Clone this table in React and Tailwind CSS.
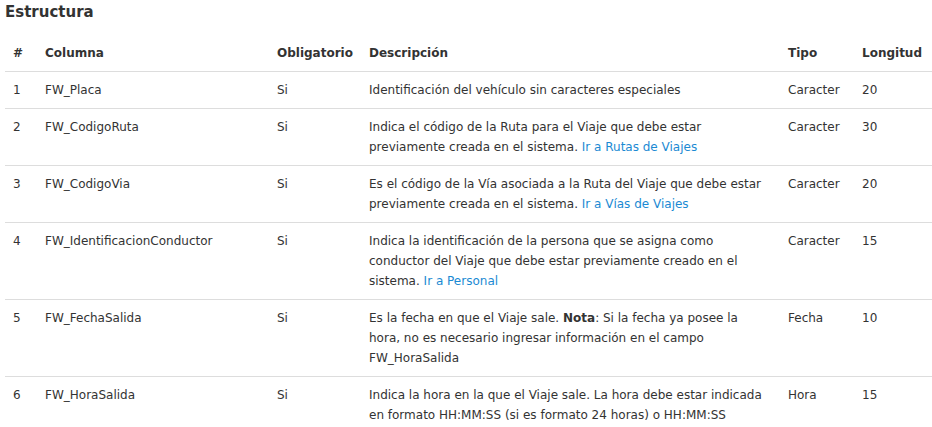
import React from "react";

const L = ({ children }) => <span className="text-[#1b8ad3]">{children}</span>;

const rows = [
  {
    n: "1",
    col: "FW_Placa",
    desc: [<>Identificación del vehículo sin caracteres especiales</>],
    tipo: "Caracter",
    len: "20",
  },
  {
    n: "2",
    col: "FW_CodigoRuta",
    desc: [
      <>Indica el código de la Ruta para el Viaje que debe estar</>,
      <>previamente creada en el sistema. <L>Ir a Rutas de Viajes</L></>,
    ],
    tipo: "Caracter",
    len: "30",
  },
  {
    n: "3",
    col: "FW_CodigoVia",
    desc: [
      <>Es el código de la Vía asociada a la Ruta del Viaje que debe estar</>,
      <>previamente creada en el sistema. <L>Ir a Vías de Viajes</L></>,
    ],
    tipo: "Caracter",
    len: "20",
  },
  {
    n: "4",
    col: "FW_IdentificacionConductor",
    desc: [
      <>Indica la identificación de la persona que se asigna como</>,
      <>conductor del Viaje que debe estar previamente creado en el</>,
      <>sistema. <L>Ir a Personal</L></>,
    ],
    tipo: "Caracter",
    len: "15",
  },
  {
    n: "5",
    col: "FW_FechaSalida",
    desc: [
      <>Es la fecha en que el Viaje sale. <b className="font-bold">Nota</b>: Si la fecha ya posee la</>,
      <>hora, no es necesario ingresar información en el campo</>,
      <>FW_HoraSalida</>,
    ],
    tipo: "Fecha",
    len: "10",
  },
  {
    n: "6",
    col: "FW_HoraSalida",
    desc: [
      <>Indica la hora en la que el Viaje sale. La hora debe estar indicada</>,
      <>en formato HH:MM:SS (si es formato 24 horas) o HH:MM:SS</>,
    ],
    tipo: "Hora",
    len: "15",
  },
];

export default function App() {
  return (
    <div
      className="w-[932px] h-[427px] overflow-hidden bg-white pl-[5px] text-[#333333]"
      style={{ fontFamily: '"DejaVu Sans", Verdana, sans-serif' }}
    >
      <h2 className="text-[15px] font-bold leading-[24px] mb-[10px]">Estructura</h2>
      <table className="table-fixed border-collapse w-[927px] text-[12px] leading-[20px]">
        <colgroup>
          <col className="w-[32px]" />
          <col className="w-[232px]" />
          <col className="w-[92px]" />
          <col className="w-[419px]" />
          <col className="w-[74px]" />
          <col className="w-[78px]" />
        </colgroup>
        <thead>
          <tr className="border-b border-[#dddddd]">
            {["#", "Columna", "Obligatorio", "Descripción", "Tipo", "Longitud"].map((h) => (
              <th key={h} className="text-left font-bold px-[8px] pt-[9px] pb-[8px] whitespace-nowrap">
                {h}
              </th>
            ))}
          </tr>
        </thead>
        <tbody>
          {rows.map((r) => (
            <tr key={r.n} className="border-b border-[#dddddd] align-top">
              <td className="px-[8px] py-[8px]">{r.n}</td>
              <td className="px-[8px] py-[8px] whitespace-nowrap">{r.col}</td>
              <td className="px-[8px] py-[8px]">Si</td>
              <td className="px-[8px] py-[8px] whitespace-nowrap">
                {r.desc.map((d, i) => (
                  <div key={i}>{d}</div>
                ))}
              </td>
              <td className="px-[8px] py-[8px]">{r.tipo}</td>
              <td className="px-[8px] py-[8px]">{r.len}</td>
            </tr>
          ))}
        </tbody>
      </table>
    </div>
  );
}
